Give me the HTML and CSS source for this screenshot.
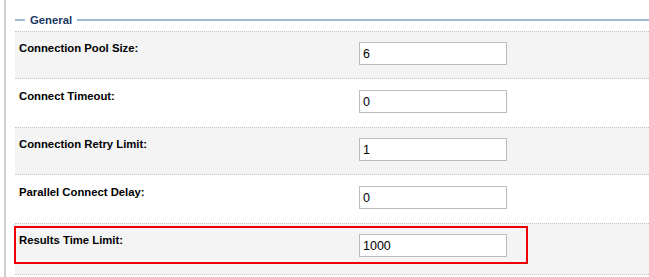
FILE: index.html
```html
<!DOCTYPE html>
<html lang="en">
<head>
  <meta charset="UTF-8" />
  <title>Connection Settings</title>
  <link rel="stylesheet" href="styles.css">
</head>
<body>
  <div class="panel">
    <div class="group-title">General</div>

    <div class="row shaded">
      <div class="field">
        <label for="poolSize">Connection Pool Size:</label>
        <input type="text" id="poolSize" value="6">
      </div>
    </div>

    <div class="row">
      <div class="field">
        <label for="timeout">Connect Timeout:</label>
        <input type="text" id="timeout" value="0">
      </div>
    </div>

    <div class="row shaded">
      <div class="field">
        <label for="retryLimit">Connection Retry Limit:</label>
        <input type="text" id="retryLimit" value="1">
      </div>
    </div>

    <div class="row">
      <div class="field">
        <label for="connectDelay">Parallel Connect Delay:</label>
        <input type="text" id="connectDelay" value="0">
      </div>
    </div>

    <!-- highlighted setting -->
    <div class="row shaded highlighted">
      <div class="field marked">
        <label for="timeLimit">Results Time Limit:</label>
        <input type="text" id="timeLimit" value="1000">
      </div>
    </div>
  </div>
</body>
</html>
```

FILE: styles.css
```css
body {
  margin: 0;
  background: #ffffff;
  font-family: 'Liberation Sans', Arial, sans-serif;
  font-size: 11.3px;
  color: #000;
}

.panel {
  margin-left: 4px;
  border-left: 2px solid #d0d0d0;
  padding: 14px 0 0 9px;
  height: 277px;
  box-sizing: border-box;
  overflow: hidden;
}

/* legend style header */
.group-title {
  display: flex;
  align-items: center;
  gap: 5px;
  margin-bottom: 5px;
  line-height: 12px;
  font-weight: bold;
  color: #1b3764;
}

.group-title::before,
.group-title::after {
  content: "";
  height: 2px;
  background: #a3bad6;
}

.group-title::before {
  width: 10px;
}

.group-title::after {
  flex: 1;
}

.row {
  border-top: 1px dotted transparent;
  border-bottom: 1px dotted transparent;
  padding: 10px 0 13px 4px;
}

.row.shaded {
  background: #f4f4f4;
  border-color: #c4c4c4;
}

.field {
  display: flex;
  align-items: flex-start;
}

.field label {
  width: 340px;
  flex-shrink: 0;
  font-weight: bold;
  line-height: 13px;
}

.field input {
  width: 148px;
  height: 23px;
  box-sizing: border-box;
  margin: 0;
  padding: 0 3px;
  border: 1px solid #bbbbbb;
  background: #fff;
  font-family: 'Liberation Sans', Arial, sans-serif;
  font-size: 12.5px;
  color: #000;
  outline: none;
}

.row.highlighted {
  padding: 2px 0 10px 0;
}

.field.marked {
  width: fit-content;
  margin-left: -1px;
  padding: 6px 19px 5px 3px;
  border: 2px solid #ee0000;
}
```
